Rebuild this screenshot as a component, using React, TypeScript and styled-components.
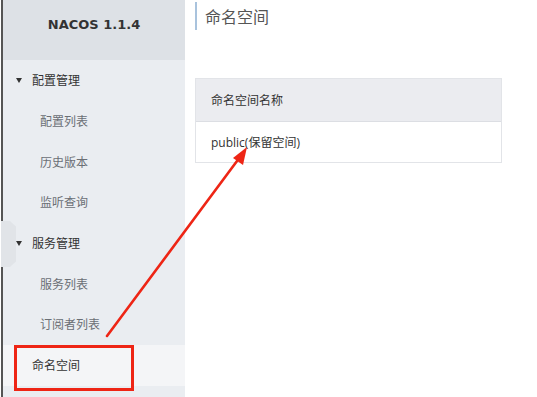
import { styled, createGlobalStyle } from "styled-components";

const GlobalStyle = createGlobalStyle`
  html, body {
    margin: 0;
    padding: 0;
    background: #fff;
    overflow: hidden;
  }
  body {
    font-family: "Open Sans", "Noto Sans CJK SC", sans-serif;
  }
`;

type MenuItem = {
  label: string;
  kind: "group" | "child" | "top";
  active?: boolean;
};

const menu: MenuItem[] = [
  { label: "配置管理", kind: "group" },
  { label: "配置列表", kind: "child" },
  { label: "历史版本", kind: "child" },
  { label: "监听查询", kind: "child" },
  { label: "服务管理", kind: "group" },
  { label: "服务列表", kind: "child" },
  { label: "订阅者列表", kind: "child" },
  { label: "命名空间", kind: "top", active: true },
];

export default function App() {
  return (
    <Page>
      <GlobalStyle />
      <Sidebar>
        <Brand>NACOS 1.1.4</Brand>
        <Menu>
          {menu.map((item) => (
            <MenuRow key={item.label} $kind={item.kind} $active={item.active}>
              {item.kind === "group" && <Caret />}
              {item.label}
            </MenuRow>
          ))}
        </Menu>
        <Collapse />
      </Sidebar>
      <Main>
        <Title>命名空间</Title>
        <Table>
          <HeadCell>命名空间名称</HeadCell>
          <Cell>public(保留空间)</Cell>
        </Table>
      </Main>

      {/* annotations drawn over the screenshot */}
      <Highlight />
      <Arrow width="537" height="397" viewBox="0 0 537 397">
        <line
          x1="107"
          y1="336"
          x2="240"
          y2="157"
          stroke="#ee2515"
          strokeWidth="2.6"
          strokeLinecap="round"
        />
        <polygon points="247,147 233,158 243,165" fill="#ee2515" />
      </Arrow>
    </Page>
  );
}

const Page = styled.div`
  position: relative;
  display: flex;
  width: 537px;
  height: 397px;
  padding-left: 1px;
  box-sizing: border-box;
`;

const Sidebar = styled.aside`
  position: relative;
  width: 184px;
  flex-shrink: 0;
  height: 100%;
  background: #eaedf1;
  border-left: 2px solid #555;
  box-sizing: border-box;
  display: flex;
  flex-direction: column;
`;

const Brand = styled.div`
  height: 60px;
  display: flex;
  align-items: center;
  justify-content: center;
  padding-bottom: 12px;
  box-sizing: border-box;
  background: #dde1e6;
  font-family: "DejaVu Sans", sans-serif;
  font-weight: bold;
  font-size: 13px;
  color: #333;
`;

const Menu = styled.nav`
  display: flex;
  flex-direction: column;
`;

const MenuRow = styled.div<{ $kind: string; $active?: boolean }>`
  height: 40.7px;
  display: flex;
  align-items: center;
  padding-left: ${(p) => (p.$kind === "child" ? "37px" : p.$kind === "group" ? "13px" : "29px")};
  font-size: 12px;
  color: ${(p) => (p.$kind === "child" ? "#6b6f75" : "#333")};
  background: ${(p) => (p.$active ? "#f4f5f7" : "transparent")};
`;

const Caret = styled.span`
  width: 0;
  height: 0;
  border-left: 3.5px solid transparent;
  border-right: 3.5px solid transparent;
  border-top: 5px solid #333;
  margin-right: 10px;
`;

const Collapse = styled.div`
  position: absolute;
  left: -2px;
  top: 221px;
  width: 15px;
  height: 46px;
  background: #e1e4e8;
  clip-path: polygon(0 0, 60% 0, 100% 12%, 100% 88%, 60% 100%, 0 100%);
`;

const Main = styled.main`
  flex: 1;
  padding-left: 10px;
  display: flex;
  flex-direction: column;
`;

const Title = styled.h2`
  margin: 2px 0 0;
  height: 28px;
  display: flex;
  align-items: center;
  padding-left: 8px;
  border-left: 2px solid #a9c3dd;
  font-size: 16px;
  font-weight: normal;
  color: #555;
`;

const Table = styled.div`
  margin-top: 48px;
  width: 305px;
  border: 1px solid #e2e4e8;
  display: flex;
  flex-direction: column;
`;

const HeadCell = styled.div`
  height: 42px;
  display: flex;
  align-items: center;
  padding-left: 15px;
  background: #ebecf0;
  border-bottom: 1px solid #dcdee3;
  font-size: 12px;
  color: #333;
`;

const Cell = styled.div`
  height: 40px;
  display: flex;
  align-items: center;
  padding-left: 15px;
  font-size: 12px;
  color: #333;
`;

const Highlight = styled.div`
  position: absolute;
  left: 14px;
  top: 345px;
  width: 120px;
  height: 46px;
  border: 3px solid #ee2515;
  box-sizing: border-box;
`;

const Arrow = styled.svg`
  position: absolute;
  left: 0;
  top: 0;
  pointer-events: none;
`;
